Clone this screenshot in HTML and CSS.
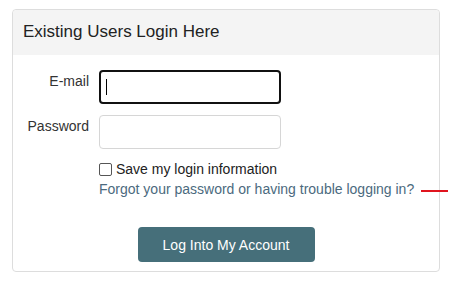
FILE: index.html
```html
<!DOCTYPE html>
<html>
<head>
<meta charset="utf-8">
<link rel="stylesheet" href="styles.css">
</head>
<body>
<div class="panel">
  <div class="panel-heading">Existing Users Login Here</div>
  <div class="panel-body">
    <div class="row">
      <label class="lbl">E-mail</label>
      <div class="input focus"><span class="caret"></span></div>
    </div>
    <div class="row">
      <label class="lbl">Password</label>
      <div class="input"></div>
    </div>
    <div class="opts">
      <label class="check"><span class="box"></span>Save my login information</label>
      <div class="forgot-wrap">
        <a class="forgot">Forgot your password or having trouble logging in?</a>
        <span class="marker"></span>
      </div>
    </div>
    <div class="actions">
      <button class="btn">Log Into My Account</button>
    </div>
  </div>
</div>
</body>
</html>
```
FILE: styles.css
```css
html, body {
  margin: 0;
  padding: 0;
  background: #fff;
  font-family: "Liberation Sans", Arial, sans-serif;
}
body {
  padding: 9px 17px 0 12px;
}
.panel {
  width: 426px;
  height: 261px;
  border: 1px solid #dddddd;
  border-radius: 4px;
  overflow: visible;
}
.panel-heading {
  background: #f4f4f4;
  height: 45px;
  box-sizing: border-box;
  padding: 12px 10px 0 10px;
  font-size: 17px;
  color: #222;
  border-radius: 4px 4px 0 0;
}
.panel-body {
  padding-top: 15px;
}
.row {
  display: grid;
  grid-template-columns: 76px 182px;
  column-gap: 10px;
  margin-bottom: 11px;
}
.lbl {
  text-align: right;
  font-size: 14px;
  color: #333;
  padding-top: 3px;
}
.input {
  height: 34px;
  box-sizing: border-box;
  border: 1px solid #d6d6d6;
  border-radius: 4px;
  background: #fff;
  position: relative;
}
.input.focus {
  border: 2px solid #111;
}
.caret {
  position: absolute;
  left: 5px;
  top: 7px;
  width: 1px;
  height: 16px;
  background: #000;
}
.opts {
  margin-left: 86px;
  margin-top: 2px;
  display: flex;
  flex-direction: column;
  gap: 2px;
}
.check {
  display: flex;
  align-items: center;
  font-size: 14px;
  color: #222;
  line-height: 18px;
}
.box {
  width: 11px;
  height: 11px;
  border: 1px solid #555;
  border-radius: 2px;
  margin-right: 4px;
  background: #fff;
}
.forgot-wrap {
  position: relative;
  line-height: 18px;
}
.forgot {
  font-size: 14px;
  color: #4b6a7e;
}
.marker {
  position: absolute;
  left: 322px;
  top: 10px;
  width: 27px;
  height: 2px;
  background: #e0141e;
}
.actions {
  display: flex;
  justify-content: center;
  margin-top: 29px;
}
.btn {
  width: 177px;
  height: 35px;
  background: #466f7a;
  color: #fff;
  border: none;
  border-radius: 4px;
  font-family: "Liberation Sans", Arial, sans-serif;
  font-size: 14px;
}
```
